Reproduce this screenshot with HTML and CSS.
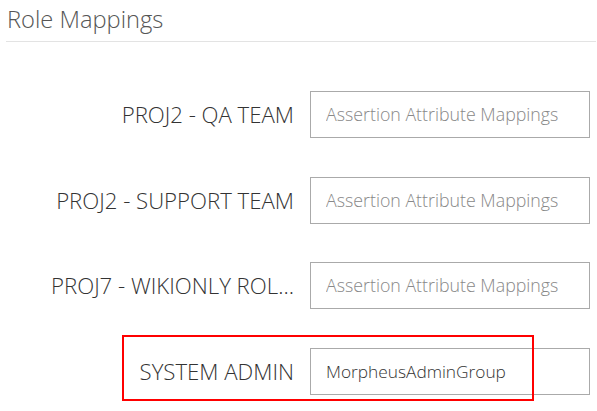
FILE: index.html
```html
<!DOCTYPE html>
<html>
<head>
<meta charset="utf-8">
<link rel="stylesheet" href="styles.css">
</head>
<body>
<div class="panel">
  <h2 class="heading">Role Mappings</h2>
  <div class="rows">
    <div class="row">
      <label class="label">PROJ2 - QA TEAM</label>
      <input class="field" type="text" placeholder="Assertion Attribute Mappings">
    </div>
    <div class="row">
      <label class="label">PROJ2 - SUPPORT TEAM</label>
      <input class="field" type="text" placeholder="Assertion Attribute Mappings">
    </div>
    <div class="row">
      <label class="label" title="PROJ7 - WIKIONLY ROLE">PROJ7 - WIKIONLY ROL...</label>
      <input class="field" type="text" placeholder="Assertion Attribute Mappings">
    </div>
    <div class="row">
      <label class="label">SYSTEM ADMIN</label>
      <input class="field" type="text" value="MorpheusAdminGroup">
      <div class="highlight"></div>
    </div>
  </div>
</div>
</body>
</html>
```
FILE: styles.css
```css
html, body {
  margin: 0;
  padding: 0;
  background: #fff;
}
body {
  font-family: "Open Sans", "Liberation Sans", sans-serif;
  width: 597px;
  height: 411px;
  overflow: hidden;
}
.panel {
  padding: 0 1px 0 6px;
}
.heading {
  margin: 0;
  font-size: 23.7px;
  font-weight: 300;
  color: #555;
  line-height: 26px;
  padding: 6px 0 9px 1px;
  border-bottom: 1px solid #e3e3e3;
}
.rows {
  display: flex;
  flex-direction: column;
  gap: 38.5px;
  padding-top: 49px;
}
.row {
  position: relative;
  display: grid;
  grid-template-columns: 288px 280px;
  column-gap: 16px;
  align-items: center;
  height: 47px;
}
.label {
  text-align: right;
  font-size: 22.2px;
  font-weight: 300;
  color: #333;
  white-space: nowrap;
}
.field {
  box-sizing: border-box;
  width: 280px;
  height: 47px;
  border: 1px solid #aaa;
  border-radius: 0;
  padding: 0 15px;
  font-family: "Open Sans", "Liberation Sans", sans-serif;
  font-size: 17.3px;
  font-weight: 300;
  color: #333;
  outline: none;
}
.field::placeholder {
  color: #888;
  font-size: 17.8px;
}
.highlight {
  position: absolute;
  left: 116px;
  top: -13px;
  width: 412px;
  height: 66px;
  box-sizing: border-box;
  border: 2px solid #f00;
  pointer-events: none;
}
```
